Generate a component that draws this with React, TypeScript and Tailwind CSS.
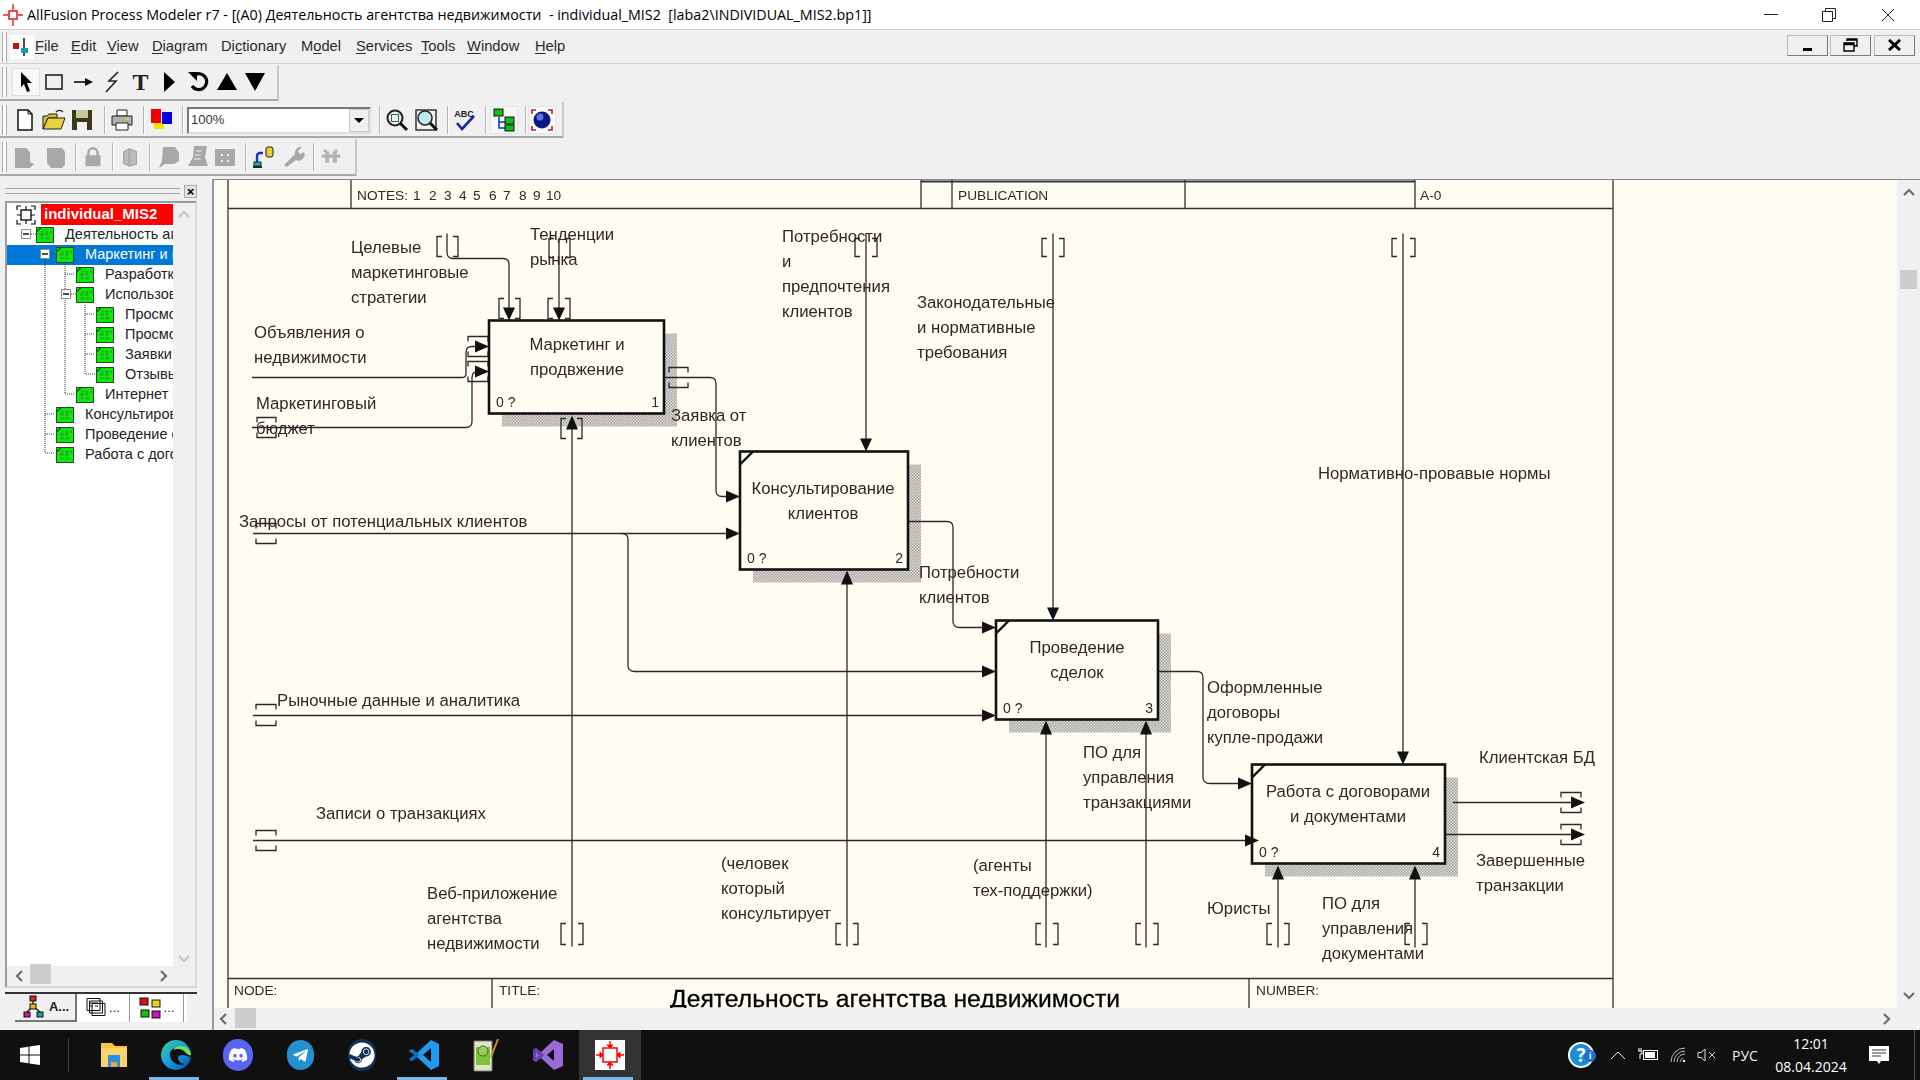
import type { ReactNode } from "react";
import { FaDiscord, FaSteam, FaTelegramPlane } from "react-icons/fa";

const menuItems = [
  { pre: "", key: "F", post: "ile", w: "w-[36px]" },
  { pre: "", key: "E", post: "dit", w: "w-[36px]" },
  { pre: "", key: "V", post: "iew", w: "w-[45px]" },
  { pre: "", key: "D", post: "iagram", w: "w-[69px]" },
  { pre: "Di", key: "c", post: "tionary", w: "w-[80px]" },
  { pre: "M", key: "o", post: "del", w: "w-[55px]" },
  { pre: "", key: "S", post: "ervices", w: "w-[65px]" },
  { pre: "", key: "T", post: "ools", w: "w-[46px]" },
  { pre: "", key: "W", post: "indow", w: "w-[68px]" },
  { pre: "", key: "H", post: "elp", w: "w-[40px]" },
];

const treeRows = [
  { level: 1, text: "Деятельность агентства недвижимости" },
  { level: 2, text: "Маркетинг и продвижение", selected: true },
  { level: 3, text: "Разработка стратегии" },
  { level: 3, text: "Использование каналов" },
  { level: 4, text: "Просмотр объявлений" },
  { level: 4, text: "Просмотр данных" },
  { level: 4, text: "Заявки клиентов" },
  { level: 4, text: "Отзывы клиентов" },
  { level: 3, text: "Интернет маркетинг" },
  { level: 2, text: "Консультирование клиентов" },
  { level: 2, text: "Проведение сделок" },
  { level: 2, text: "Работа с договорами" },
];

const treeIndent: Record<number, string> = {
  1: "pl-[29px]",
  2: "pl-[49px]",
  3: "pl-[69px]",
  4: "pl-[89px]",
};

// diagram data, in screen coordinates (the svg viewBox starts at the canvas corner)
const boxes = [
  { x: 489, y: 320, r: 664, b: 413, num: "1", corner: false, lines: ["Маркетинг и", "продвжение"], cx: 577, ty: 344 },
  { x: 740, y: 451, r: 908, b: 569, num: "2", corner: true, lines: ["Консультирование", "клиентов"], cx: 823, ty: 488 },
  { x: 996, y: 620, r: 1158, b: 719, num: "3", corner: true, lines: ["Проведение", "сделок"], cx: 1077, ty: 647 },
  { x: 1252, y: 764, r: 1445, b: 863, num: "4", corner: true, lines: ["Работа с договорами", "и документами"], cx: 1348, ty: 791 },
];

const labels = [
  { x: 351, y: 247, lines: ["Целевые", "маркетинговые", "стратегии"] },
  { x: 530, y: 234, lines: ["Тенденции", "рынка"] },
  { x: 254, y: 332, lines: ["Объявления о", "недвижимости"] },
  { x: 256, y: 403, lines: ["Маркетинговый", "бюджет"] },
  { x: 671, y: 415, lines: ["Заявка от", "клиентов"] },
  { x: 239, y: 521, lines: ["Запросы от потенциальных клиентов"] },
  { x: 277, y: 700, lines: ["Рыночные данные и аналитика"] },
  { x: 316, y: 813, lines: ["Записи о транзакциях"] },
  { x: 782, y: 236, lines: ["Потребности", "и", "предпочтения", "клиентов"] },
  { x: 917, y: 302, lines: ["Законодательные", "и нормативные", "требования"] },
  { x: 1318, y: 473, lines: ["Нормативно-провавые нормы"] },
  { x: 919, y: 572, lines: ["Потребности", "клиентов"] },
  { x: 1207, y: 687, lines: ["Оформленные", "договоры", "купле-продажи"] },
  { x: 1083, y: 752, lines: ["ПО для", "управления", "транзакциями"] },
  { x: 1479, y: 757, lines: ["Клиентская БД"] },
  { x: 1476, y: 860, lines: ["Завершенные", "транзакции"] },
  { x: 973, y: 865, lines: ["(агенты", "тех-поддержки)"] },
  { x: 1207, y: 908, lines: ["Юристы"] },
  { x: 1322, y: 903, lines: ["ПО для", "управления", "документами"] },
  { x: 721, y: 863, lines: ["(человек", "который", "консультирует"] },
  { x: 427, y: 893, lines: ["Веб-приложение", "агентства", "недвижимости"] },
];

const noteDigits = [
  [413, "1"], [429, "2"], [444, "3"], [459, "4"], [473, "5"],
  [489, "6"], [503, "7"], [519, "8"], [533, "9"], [546, "10"],
] as const;

const arrowLines = [
  "M447 233V252Q447 258 453 258H503Q509 258 509 264V310",
  "M559 238V310",
  "M252 377H462Q466 377 466 373V352Q466 346 472 346H480",
  "M252 427H466Q472 427 472 421V377Q472 371 478 371H480",
  "M572 946V425",
  "M664 377H710Q716 377 716 383V490Q716 496 722 496H730",
  "M253 533H732",
  "M622 533Q628 533 628 539V665Q628 671 635 671H986",
  "M253 715H986",
  "M253 840H1248",
  "M847 946V583",
  "M866 233V440",
  "M1053 233V609",
  "M1403 233V753",
  "M908 521H947Q953 521 953 527V621Q953 627 960 627H986",
  "M1158 671H1197Q1203 671 1203 677V777Q1203 783 1210 783H1242",
  "M1046 947V733",
  "M1146 947V733",
  "M1278 947V876",
  "M1415 947V876",
  "M1453 802H1572",
  "M1445 834H1572",
];

// tips of the arrow heads
const headsDown = [[509, 320], [559, 320], [866, 451], [1053, 620], [1403, 764]];
const headsUp = [[572, 415], [847, 570], [1046, 720], [1146, 720], [1278, 865], [1415, 865]];
const headsRight = [
  [489, 346], [489, 371], [740, 496], [740, 533], [996, 627], [996, 671], [996, 715],
  [1252, 783], [1259, 840], [1585, 802], [1585, 834],
];

const tunnelsV = [
  [437, 458, 236, 256], [499, 520, 298, 318], [549, 570, 238, 257], [548, 570, 298, 318],
  [561, 582, 418, 438], [561, 583, 923, 944], [836, 858, 923, 944], [1036, 1058, 923, 944],
  [1136, 1158, 923, 944], [1267, 1289, 923, 944], [1405, 1427, 923, 944],
  [855, 877, 238, 256], [1042, 1064, 238, 256], [1392, 1415, 238, 256],
];
const tunnelsH = [
  [468, 488, 336, 356], [468, 488, 361, 381], [669, 688, 367, 387], [257, 276, 417, 437],
  [256, 276, 523, 543], [256, 276, 704, 725], [256, 276, 830, 850],
  [1561, 1581, 792, 812], [1561, 1581, 824, 844],
];

const Slot = ({ className, children }: { className: string; children: ReactNode }) => (
  <div className={`flex h-7 w-7 shrink-0 items-center justify-center ${className}`}>{children}</div>
);

const Sep = ({ className }: { className: string }) => (
  <div className={`h-7 w-[2px] shrink-0 border-l border-r border-l-[#b4b4b4] border-r-white ${className}`} />
);

const Grip = () => (
  <div className="ml-[2px] mr-[3px] h-[30px] w-[5px] shrink-0 border-x border-x-[#a8a8a8] bg-white" />
);

const Ico = ({ children, size = 24 }: { children: ReactNode; size?: number }) => (
  <svg width={size} height={size} viewBox="0 0 24 24">
    {children}
  </svg>
);

const TreeIcon = () => (
  <svg width="18" height="16" viewBox="0 0 19 17" className="shrink-0">
    <rect x="0.5" y="0.5" width="18" height="16" fill="#00f000" stroke="#2c3a2c" />
    <path d="M1 5L5 1" stroke="#1c3a1c" strokeWidth="1.2" />
    <path d="M6 5h2M10 5h3M15 5h2M4 8h4M10 8h3M5 12h3M10 12h4" stroke="#3f8a3f" strokeWidth="2" />
  </svg>
);

const Chevron = ({ d, color = "#6d6d6d" }: { d: string; color?: string }) => (
  <svg width="12" height="12" viewBox="0 0 12 12">
    <path d={d} fill="none" stroke={color} strokeWidth="2.2" />
  </svg>
);

const ModelTree = () => (
  <div className="relative flex h-[787px] w-[192px] shrink-0 flex-col border-2 border-[#9c9c9c] border-b-[#d8d8d8] border-r-[#d8d8d8] bg-[#f0f0f0]">
    <div className="flex min-h-0 flex-1">
      <div className="relative w-[166px] overflow-hidden bg-white pt-px">
        <div className="flex h-[21px] items-center pl-[9px]">
          <svg width="20" height="20" viewBox="0 0 20 20" className="shrink-0">
            <rect x="5" y="5" width="10" height="10" fill="none" stroke="#111" strokeWidth="1.4" />
            <path d="M10 1v4M10 15v4M1 10h4M15 10h4M1 5V1h4M15 1h4v4M1 15v4h4M15 19h4v-4" fill="none" stroke="#111" strokeWidth="1.2" />
          </svg>
          <div className="ml-[5px] flex h-[21px] flex-1 items-center bg-[#ff0000] pl-[3px] text-[15px] font-bold text-white">
            individual_MIS2
          </div>
        </div>
        {treeRows.map((row) => (
          <div
            key={row.text}
            className={`flex h-5 items-center whitespace-nowrap ${treeIndent[row.level]} ${row.selected ? "bg-[#0078d7] text-white" : "text-[#222]"}`}
          >
            <TreeIcon />
            <span className="ml-[11px] text-[14.5px]">{row.text}</span>
          </div>
        ))}
        {/* dotted connectors and the expand boxes lie over the rows */}
        <svg className="absolute left-0 top-0" width="166" height="280" viewBox="7 203 166 280">
          <path
            d="M45 259V453H55M45 414H55M45 434H55M65 264V394H75M65 274H75M85 305V374H95M85 314H95M85 334H95M85 354H95M71 294H76M50 254H56M31 234H36"
            fill="none"
            stroke="#333"
            strokeDasharray="1 1"
          />
          <path d="M21.5 229.5h9v9h-9zM40.5 249.5h9v9h-9zM61.5 289.5h9v9h-9z" fill="#fff" stroke="#8a8a8a" />
          <path d="M23 234h6M42 254h6M63 294h6" stroke="#111" strokeWidth="1.4" />
        </svg>
      </div>
      <div className="flex flex-1 flex-col items-center justify-between pb-[2px] pt-[6px]">
        <Chevron d="M1 8l5-5 5 5" color="#c4c4c4" />
        <Chevron d="M1 4l5 5 5-5" color="#c4c4c4" />
      </div>
    </div>
    <div className="flex h-[20px] items-center justify-between pl-[7px] pr-[26px]">
      <Chevron d="M8 1L3 6l5 5" />
      <div className="absolute bottom-[2px] left-[23px] h-[20px] w-[21px] bg-[#cdcdcd]" />
      <Chevron d="M4 1l5 5-5 5" />
    </div>
  </div>
);

const TabIcon1 = () => (
  <svg width="26" height="24" viewBox="0 0 26 24">
    <path d="M12 6V11M6 17L12 11L19 17" fill="none" stroke="#111" strokeWidth="1.2" />
    <rect x="9" y="1" width="6" height="5" fill="#e02020" stroke="#111" />
    <rect x="9" y="9" width="6" height="5" fill="#e0c020" stroke="#111" />
    <rect x="3" y="17" width="6" height="5" fill="#c020a0" stroke="#111" />
    <rect x="16" y="17" width="6" height="5" fill="#20a0a0" stroke="#111" />
  </svg>
);

const LeftPanel = () => (
  <div className="flex h-full w-[197px] shrink-0 flex-col pl-[5px] pt-[2px]">
    <div className="flex h-5 items-center">
      <div className="h-[6px] w-[175px] border-y border-y-[#a8a8a8]" />
      <div className="ml-[4px] flex h-[13px] w-[13px] items-center justify-center border border-[#a8a8a8] bg-[#e4e4e4] text-[13px] font-bold leading-none text-black">
        ×
      </div>
    </div>
    <ModelTree />
    <div className="mt-1 h-[29px] w-[192px] border-t-2 border-t-[#333]">
      <div className="ml-[10px] flex h-[28px] w-[172px] bg-white text-[13px] text-[#222]">
        <div className="flex w-[62px] items-center justify-center gap-[2px] border-b-2 border-r-2 border-b-[#777] border-r-[#777] bg-[#f0f0f0] font-bold">
          <TabIcon1 />
          <span>A...</span>
        </div>
        <div className="flex w-[53px] items-center justify-center gap-[3px] border-r border-r-[#999]">
          <svg width="20" height="22" viewBox="0 0 20 22">
            <path d="M6 6.5h13v12H6zM3.5 4h13v12h-13zM1 1.5h13v12H1z" fill="#fff" stroke="#111" />
            <path d="M3 6h9M3 9h4M9 9h3" stroke="#111" />
          </svg>
          <span>...</span>
        </div>
        <div className="flex w-[54px] items-center justify-center gap-[3px] border-r border-r-[#999]">
          <svg width="22" height="22" viewBox="0 0 22 22">
            <rect x="1" y="1" width="8" height="7" fill="#e01010" stroke="#111" />
            <rect x="13" y="3" width="8" height="7" fill="#e8d020" stroke="#111" />
            <rect x="2" y="13" width="8" height="7" fill="#10c010" stroke="#111" />
            <rect x="13" y="14" width="8" height="7" fill="#d010c0" stroke="#111" />
          </svg>
          <span>...</span>
        </div>
      </div>
    </div>
  </div>
);

const Diagram = () => (
  <svg
    viewBox="214 179.5 1683 828"
    width="1683"
    height="828"
    className="block fill-[#2a2a2a] font-['Liberation_Sans',sans-serif] text-[16.7px] blur-[0.35px]"
  >
    <defs>
      <pattern id="hatch" width="3" height="3" patternUnits="userSpaceOnUse">
        <rect width="3" height="3" fill="#fffcf2" />
        <rect width="1.5" height="1.5" fill="#848484" />
        <rect x="1.5" y="1.5" width="1.5" height="1.5" fill="#848484" />
      </pattern>
    </defs>

    {/* frame of the IDEF0 form */}
    <g fill="none" stroke="#333" strokeWidth="1.3">
      <path d="M228 179V1008M1613 179V1008M228 208H1613M228 978H1613" />
      <path d="M351 179V208M921 179V208M952 179V208M1185 179V208M1415 179V208M492 978V1008M1249 978V1008" />
      <path d="M921 181H1415" strokeWidth="2" />
    </g>
    <g className="text-[13.7px]">
      <text x="357" y="199">NOTES:</text>
      {noteDigits.map(([x, digit]) => (
        <text key={digit} x={x} y="199">{digit}</text>
      ))}
      <text x="958" y="199">PUBLICATION</text>
      <text x="1420" y="199">A-0</text>
      <text x="234" y="994">NODE:</text>
      <text x="499" y="994">TITLE:</text>
      <text x="1256" y="994">NUMBER:</text>
    </g>
    <text x="895" y="1006" textAnchor="middle" className="fill-black text-[24.7px]" stroke="#000" strokeWidth="0.3">
      Деятельность агентства недвижимости
    </text>

    {/* shadows first, then the boxes */}
    {boxes.map((b) => (
      <path
        key={b.num}
        d={`M${b.r} ${b.y + 13}h13V${b.b + 13}H${b.x + 13}V${b.b}H${b.r}z`}
        fill="url(#hatch)"
      />
    ))}

    <g fill="none" stroke="#2a2a2a" strokeWidth="1.3">
      {arrowLines.map((d) => (
        <path key={d} d={d} />
      ))}
      {tunnelsV.map(([l, r, t, b]) => (
        <path key={`${l}${t}`} d={`M${l + 5} ${t}H${l}V${b}H${l + 5}M${r - 5} ${t}H${r}V${b}H${r - 5}`} />
      ))}
      {tunnelsH.map(([l, r, t, b]) => (
        <path key={`${l}${t}`} d={`M${l} ${t + 5}V${t}H${r}V${t + 5}M${l} ${b - 5}V${b}H${r}V${b - 5}`} />
      ))}
    </g>

    {boxes.map((b) => (
      <g key={b.num}>
        <rect
          x={b.x}
          y={b.y}
          width={b.r - b.x}
          height={b.b - b.y}
          fill="none"
          stroke="#111"
          strokeWidth="2.6"
        />
        {b.corner && <path d={`M${b.x} ${b.y + 13}L${b.x + 13} ${b.y}`} stroke="#111" strokeWidth="2.4" />}
        {b.lines.map((line, i) => (
          <text key={line} x={b.cx} y={b.ty + 5 + i * 25} textAnchor="middle">
            {line}
          </text>
        ))}
        <text x={b.x + 7} y={b.b - 7} className="text-[14px]">0 ?</text>
        <text x={b.r - 5} y={b.b - 7} textAnchor="end" className="text-[14px]">{b.num}</text>
      </g>
    ))}

    <g fill="#111">
      {headsDown.map(([x, y]) => (
        <path key={`${x}${y}`} d={`M${x} ${y}l-6-13h12z`} />
      ))}
      {headsUp.map(([x, y]) => (
        <path key={`${x}${y}`} d={`M${x} ${y}l-6 14h12z`} />
      ))}
      {headsRight.map(([x, y]) => (
        <path key={`${x}${y}`} d={`M${x} ${y}l-14-6v12z`} />
      ))}
    </g>

    {labels.map((l) =>
      l.lines.map((line, i) => (
        <text key={`${l.x}${line}`} x={l.x} y={l.y + 5 + i * 25}>
          {line}
        </text>
      )),
    )}
  </svg>
);

const TaskBtn = ({ children, active, current }: { children: ReactNode; active?: boolean; current?: boolean }) => (
  <div className={`relative flex h-full w-[62px] items-center justify-center ${current ? "bg-[#333]" : ""}`}>
    {children}
    {active && <div className="absolute bottom-0 left-[4px] right-[8px] h-[3px] bg-[#76b9ed]" />}
  </div>
);

const Taskbar = () => {
  const tray = "flex shrink-0 items-center justify-center";
  return (
    <div className="flex h-[50px] shrink-0 items-center bg-[#101010] font-['Open_Sans',sans-serif] text-white">
      <div className="flex h-full w-[60px] shrink-0 items-center justify-center">
        <svg width="20" height="20" viewBox="0 0 20 20" fill="#fff">
          <path d="M0 3l8.5-1.2V9.5H0zM9.5 1.6L20 0v9.5H9.5zM0 10.5h8.5v7.7L0 17zM9.5 10.5H20V20L9.5 18.4z" />
        </svg>
      </div>
      <div className="ml-[8px] h-[34px] w-px shrink-0 bg-[#444]" />
      <div className="ml-[14px] flex h-full items-center">
        <TaskBtn>
          <svg width="30" height="28" viewBox="0 0 30 28">
            <path d="M2 2h11l3 3h12v21H2z" fill="#f6c344" />
            <path d="M2 7h26v19H2z" fill="#fbd568" />
            <path d="M9 14h12v12h-3v-5h-6v5H9z" fill="#2d8fe0" />
            <rect x="12" y="21" width="6" height="5" fill="#e9a92e" />
          </svg>
        </TaskBtn>
        <TaskBtn active>
          <svg width="32" height="32" viewBox="0 0 32 32">
            <defs>
              <linearGradient id="edge" x1="0" y1="0" x2="1" y2="1">
                <stop offset="0" stopColor="#3bd0a0" />
                <stop offset="0.5" stopColor="#1a9be0" />
                <stop offset="1" stopColor="#0a4fa8" />
              </linearGradient>
            </defs>
            <circle cx="16" cy="16" r="15" fill="url(#edge)" />
            <path d="M31 18c-1-7-7-10-12-10-6 0-10 4-9 9 1 6 8 11 15 8-4 0-7-3-7-6 0-2 2-3 4-3 4 0 7 2 9 2z" fill="#101010" />
            <path d="M31 16c0-6-5-9-10-9-4 0-7 2-8 4 3-1 8-2 12 2 2 2 4 4 6 3z" fill="#6fe05a" />
          </svg>
        </TaskBtn>
        <TaskBtn>
          <div className="flex h-[32px] w-[30px] items-center justify-center rounded-full bg-[#5865f2]">
            <FaDiscord className="text-[20px] text-white" />
          </div>
        </TaskBtn>
        <TaskBtn>
          <div className="flex h-[30px] w-[27px] items-center justify-center rounded-full bg-[#2590cf]">
            <FaTelegramPlane className="text-[17px] text-white" />
          </div>
        </TaskBtn>
        <TaskBtn>
          <div className="flex h-[32px] w-[28px] items-center justify-center rounded-full bg-[#12315a]">
            <FaSteam className="text-[26px] text-white" />
          </div>
        </TaskBtn>
        <TaskBtn active>
          <svg width="30" height="32" viewBox="0 0 30 32">
            <path d="M22 1l8 4v22l-8 4L8 18l-5 4-3-2 6-4-6-4 3-2 5 4zM22 9l-8 7 8 7z" fill="#1f9cf0" />
            <path d="M0 12l3-2 5 4 2 2-2 2-5 4-3-2 6-4z" fill="#0b6fb8" />
          </svg>
        </TaskBtn>
        <TaskBtn>
          <svg width="28" height="36" viewBox="0 0 28 36">
            <path d="M2 4h18v30H2z" fill="#dfe6c8" stroke="#777" />
            <rect x="4" y="10" width="14" height="18" fill="#7dc23a" />
            <circle cx="11" cy="14" r="5" fill="#9ad060" stroke="#3f6a20" />
            <path d="M19 20L26 2" stroke="#c89020" strokeWidth="2" />
          </svg>
        </TaskBtn>
        <TaskBtn>
          <svg width="30" height="32" viewBox="0 0 30 32">
            <path d="M21 1l9 4v22l-9 4L8 19l-5 4-3-2V11l3-2 5 4zM21 10l-7 6 7 6z" fill="#9a6ad6" />
            <path d="M0 11l3-2 5 4 3 3-3 3-5 4-3-2zM3 13v6l3-3z" fill="#6a3fb0" />
          </svg>
        </TaskBtn>
        <TaskBtn active current>
          <div className="flex h-[30px] w-[30px] items-center justify-center bg-white">
            <svg width="30" height="30" viewBox="0 0 30 30" fill="none" stroke="#f00">
              <rect x="8" y="8" width="14" height="14" strokeWidth="1.5" />
              <path d="M15 1v6M15 23v6M1 15h6M23 15h6" strokeWidth="1.4" />
              <path d="M12 5h6l-3 3zM12 25h6l-3-3zM5 12v6l3-3zM25 12v6l-3-3z" fill="#f00" />
            </svg>
          </div>
        </TaskBtn>
      </div>
      <div className="ml-auto flex h-full items-center text-[14px]">
        <div className={`${tray} relative w-[30px]`}>
          <div className="flex h-[26px] w-[26px] items-center justify-center rounded-full border-2 border-white bg-[#1b8fd6] text-[19px] font-bold">?</div>
          <div className="absolute bottom-[6px] right-0 flex h-3 w-3 items-center justify-center rounded-full bg-[#1b6fd6] text-[9px] font-bold">i</div>
        </div>
        <div className={`${tray} ml-[14px] w-[16px]`}>
          <svg width="16" height="9" viewBox="0 0 16 9" fill="none" stroke="#eee"><path d="M1 8l7-7 7 7" /></svg>
        </div>
        <div className={`${tray} ml-[11px] w-[22px]`}>
          <svg width="22" height="14" viewBox="0 0 22 14" fill="none" stroke="#fff">
            <rect x="6.5" y="2.5" width="14" height="9" />
            <rect x="8" y="4" width="10" height="6" fill="#fff" stroke="none" />
            <path d="M2 0v3M4 0v3M1 3h4v3H3v5" />
          </svg>
        </div>
        <div className={`${tray} ml-[11px] w-[16px]`}>
          <svg width="16" height="16" viewBox="0 0 16 16" fill="none" stroke="#bbb">
            <path d="M1 15A14 14 0 0 1 15 1M4 15A11 11 0 0 1 15 4M7 15A8 8 0 0 1 15 7M10 15a5 5 0 0 1 3-4" />
            <circle cx="14" cy="14" r="1.2" fill="#fff" stroke="none" />
          </svg>
        </div>
        <div className={`${tray} ml-[11px] w-[20px]`}>
          <svg width="20" height="14" viewBox="0 0 20 14" fill="none" stroke="#ddd">
            <path d="M1 4.5h3l4-3.5v12L4 9.5H1zM12 4l6 6M18 4l-6 6" />
          </svg>
        </div>
        <div className="ml-[13px] w-[30px] text-center text-[14px] text-[#eee]">РУС</div>
        <div className="ml-[15px] flex w-[72px] flex-col items-center text-[14px] leading-[23px]">
          <span>12:01</span>
          <span>08.04.2024</span>
        </div>
        <div className={`${tray} ml-[22px] w-[20px]`}>
          <svg width="20" height="20" viewBox="0 0 20 20">
            <path d="M0 1h20v15h-8l-2 3-2-3H0z" fill="#fff" />
            <path d="M3 5h14M3 8h14M3 11h9" stroke="#333" />
          </svg>
        </div>
        <div className="ml-[25px] h-full w-[6px] border-l border-l-[#555]" />
      </div>
    </div>
  );
};

export default function App() {
  return (
    <div className="flex h-[1080px] w-[1920px] flex-col overflow-hidden bg-[#f0f0f0] font-['Liberation_Sans',sans-serif]">
      {/* title bar */}
      <div className="flex h-[29px] shrink-0 items-center bg-white">
        <svg width="20" height="24" viewBox="0 0 20 24" className="ml-[3px] mr-[4px] shrink-0" fill="none" stroke="#e8202a">
          <rect x="6" y="8" width="8" height="8" strokeWidth="1.6" />
          <path d="M10 1v6M10 17v6M0 12h5M15 12h5" strokeWidth="1.4" />
        </svg>
        <span className="whitespace-pre font-['Open_Sans',sans-serif] text-[14.3px] text-black">
          {"AllFusion Process Modeler r7 - [(A0) Деятельность агентства недвижимости  - individual_MIS2  [laba2\\INDIVIDUAL_MIS2.bp1]]"}
        </span>
        <svg width="14" height="2" className="ml-auto mr-[44px]"><rect width="14" height="1" fill="#222" /></svg>
        <svg width="14" height="14" viewBox="0 0 14 14" fill="none" stroke="#222" className="mr-[45px]">
          <path d="M3.5 3.5V.5h10v10h-3M.5 3.5h10v10H.5z" />
        </svg>
        <svg width="14" height="14" viewBox="0 0 14 14" stroke="#222" className="mr-[25px]">
          <path d="M1 1l12 12M13 1L1 13" />
        </svg>
      </div>

      {/* menu bar */}
      <div className="flex h-[35px] shrink-0 items-center border-y border-y-[#d0d0d0] text-[14.7px] text-[#2a2a2a]">
        <Grip />
        <svg width="24" height="24" viewBox="0 0 24 24" className="mr-[1px] shrink-0">
          <rect width="24" height="24" fill="#fff" />
          <path d="M14 3v18" stroke="#111" strokeWidth="1.5" />
          <rect x="3" y="8" width="6" height="6" fill="#c01010" />
          <rect x="11" y="13" width="7" height="5" fill="#10a0b0" />
        </svg>
        {menuItems.map((m) => (
          <div key={m.key + m.post} className={m.w}>
            {m.pre}
            <span className="underline underline-offset-2">{m.key}</span>
            {m.post}
          </div>
        ))}
        <div className="mb-[3px] ml-auto mr-[5px] flex h-[21px] gap-[2px]">
          <div className="flex w-[41px] items-end justify-center border border-[#bbb] border-b-[#777] border-r-[#777] pb-[4px]">
            <div className="h-[3px] w-[9px] bg-black" />
          </div>
          <div className="flex w-[41px] items-center justify-center border border-[#bbb] border-b-[#777] border-r-[#777]">
            <svg width="15" height="14" viewBox="0 0 15 14" fill="none" stroke="#000" strokeWidth="1.4">
              <path d="M4 3V1h10v7h-3M1 5h10v8H1zM1 6.5h10M4 2h10" />
            </svg>
          </div>
          <div className="ml-[1px] flex w-[41px] items-center justify-center border border-[#bbb] border-b-[#777] border-r-[#777]">
            <svg width="13" height="12" viewBox="0 0 13 12" stroke="#000" strokeWidth="3">
              <path d="M1 1l11 10M12 1L1 11" />
            </svg>
          </div>
        </div>
      </div>

      {/* toolbars */}
      <div className="flex shrink-0 flex-col gap-px pb-[3px] pt-px">
        <div className="flex h-[36px] w-[279px] items-center gap-[0.7px] border-b-2 border-r-2 border-b-[#a8a8a8] border-r-[#c8c8c8]">
          <Grip />
          <Slot className="ml-px border border-[#e0e0e0] bg-[#f8f8f8]">
            <Ico><path d="M7 2l11 11h-5l3 8-3 1-3-8-3 3z" fill="#000" /></Ico>
          </Slot>
          <Slot className="">
            <Ico><rect x="4" y="5" width="16" height="14" fill="none" stroke="#222" strokeWidth="1.6" /></Ico>
          </Slot>
          <Slot className="">
            <Ico><path d="M3 12h12" stroke="#222" strokeWidth="1.8" /><path d="M22 12l-8-4v8z" fill="#111" /></Ico>
          </Slot>
          <Slot className="">
            <Ico><path d="M18 2L9 11h7L6 22" fill="none" stroke="#222" strokeWidth="1.6" /></Ico>
          </Slot>
          <Slot className="">
            <span className="font-['Liberation_Serif',serif] text-[24px] font-bold leading-none text-[#222]">T</span>
          </Slot>
          <Slot className="">
            <Ico><path d="M7 2l11 10L7 22z" fill="#000" /></Ico>
          </Slot>
          <Slot className="">
            <Ico>
              <path d="M7 6a8 8 0 1 1-1 10" fill="none" stroke="#000" strokeWidth="3.2" />
              <path d="M2 2h9v9z" fill="#000" />
            </Ico>
          </Slot>
          <Slot className="">
            <Ico><path d="M12 3l10 17H2z" fill="#000" /></Ico>
          </Slot>
          <Slot className="">
            <Ico><path d="M2 3h20L12 21z" fill="#000" /></Ico>
          </Slot>
        </div>

        <div className="flex h-[36px] w-[564px] items-center border-b-2 border-r-2 border-b-[#a8a8a8] border-r-[#c8c8c8] pt-[2px]">
          <Grip />
          <Slot className="ml-px">
            <Ico><path d="M5 2h10l4 4v16H5z" fill="#fff" stroke="#111" strokeWidth="1.5" /><path d="M15 2v4h4" fill="none" stroke="#111" /></Ico>
          </Slot>
          <Slot className="ml-px">
            <Ico>
              <path d="M1 8h4l2-2h8v4H6L1 21z" fill="#d8c030" stroke="#222" />
              <path d="M6 10h17l-4 11H1z" fill="#e8d040" stroke="#222" />
              <path d="M14 4a5 5 0 0 1 7 0" fill="none" stroke="#222" strokeWidth="1.4" />
            </Ico>
          </Slot>
          <Slot className="">
            <Ico>
              <path d="M2 2h20v20H2z" fill="#3a3a14" />
              <rect x="6" y="2" width="12" height="8" fill="#c8c8a0" />
              <rect x="7" y="14" width="10" height="8" fill="#f0f0f0" />
            </Ico>
          </Slot>
          <Sep className="ml-[8px]" />
          <Slot className="ml-[2px]">
            <Ico>
              <path d="M7 2h10v6H7z" fill="#fff" stroke="#222" />
              <path d="M2 8h20v9H2z" fill="#b0b0b0" stroke="#222" />
              <path d="M6 15h12v7H6z" fill="#fff" stroke="#222" />
              <rect x="15" y="10" width="4" height="2" fill="#e0d030" />
            </Ico>
          </Slot>
          <Sep className="ml-[7px]" />
          <Slot className="ml-[2px]">
            <Ico>
              <rect x="5" y="14" width="10" height="7" fill="#ffe000" />
              <rect x="13" y="4" width="10" height="12" fill="#0000e8" />
              <rect x="2" y="1" width="10" height="14" fill="#f00000" />
            </Ico>
          </Slot>
          <Sep className="ml-[7px]" />
          <div className="ml-[3px] flex h-[27px] w-[184px] items-center justify-between border-2 border-[#777] border-b-[#ddd] border-r-[#ddd] bg-white pl-[2px] text-[13px] text-[#333]">
            100%
            <div className="flex h-[23px] w-[20px] items-center justify-center border border-[#ccc] bg-[#f0f0f0]">
              <div className="h-0 w-0 border-x-[5px] border-t-[5px] border-x-transparent border-t-black" />
            </div>
          </div>
          <Sep className="ml-[8px]" />
          <Slot className="ml-[2px]">
            <Ico>
              <circle cx="10" cy="10" r="7.5" fill="#dff3f3" stroke="#222" strokeWidth="2" />
              <rect x="6.5" y="6.5" width="7" height="7" fill="none" stroke="#555" />
              <path d="M15 15l7 7" stroke="#111" strokeWidth="3" />
            </Ico>
          </Slot>
          <Slot className="ml-px">
            <Ico>
              <path d="M2 2h20v20H2z" fill="none" stroke="#333" strokeWidth="1.5" />
              <circle cx="11" cy="10" r="7" fill="#bfeaf5" stroke="#222" strokeWidth="1.5" />
              <path d="M16 15l7 7" stroke="#111" strokeWidth="3" />
            </Ico>
          </Slot>
          <Sep className="ml-[7px]" />
          <Slot className="ml-px">
            <Ico>
              <text x="12" y="9" textAnchor="middle" className="fill-[#222] text-[9px] font-bold">ABC</text>
              <path d="M5 15l5 6L22 8" fill="none" stroke="#1a2a9c" strokeWidth="2.6" />
            </Ico>
          </Slot>
          <Sep className="ml-[7px]" />
          <Slot className="ml-[3px] border border-[#e4e4e4] bg-[#f8f8f8]">
            <Ico>
              <path d="M7 9v11h6M7 14h6" fill="none" stroke="#0030e0" strokeWidth="1.5" />
              <rect x="2" y="1" width="9" height="7" fill="#10c010" stroke="#111" />
              <rect x="13" y="9" width="9" height="7" fill="#10c010" stroke="#111" />
              <rect x="13" y="17" width="9" height="6" fill="#10c010" stroke="#111" />
            </Ico>
          </Slot>
          <Sep className="ml-[7px]" />
          <Slot className="ml-px border border-[#e4e4e4] bg-[#f8f8f8]">
            <Ico>
              <circle cx="12" cy="12" r="8.5" fill="#0a1a80" />
              <circle cx="10" cy="9" r="3.5" fill="#5a78e0" />
              <path d="M2 6V2h4M18 2h4v4M2 18v4h4M18 22h4v-4" fill="none" stroke="#b02020" strokeWidth="1.6" />
            </Ico>
          </Slot>
        </div>

        <div className="flex h-[37px] w-[357px] items-center border-b-2 border-r-2 border-b-[#a8a8a8] border-r-[#c8c8c8]">
          <Grip />
          <Slot className="">
            <Ico><path d="M3 3h11l4 4v10l4 2-4 4H3z" fill="#a8a8a8" /></Ico>
          </Slot>
          <Slot className="ml-[3px]">
            <Ico><path d="M4 8V3h15l3 4v13l-3 3H8l-4-5z" fill="#a8a8a8" /></Ico>
          </Slot>
          <Sep className="ml-[6px]" />
          <Slot className="ml-[2px]">
            <Ico size={20}><path d="M5 10V7a7 7 0 0 1 14 0v3h2v13H3V10zM8 10h8V7a4 4 0 0 0-8 0z" fill="#a8a8a8" /></Ico>
          </Slot>
          <Sep className="ml-[5px]" />
          <Slot className="ml-[2px]">
            <Ico size={22}><path d="M5 6l6-3 8 3v14l-8 2-6-3z" fill="#bbb" stroke="#999" /><path d="M11 3v19" stroke="#999" /></Ico>
          </Slot>
          <Sep className="ml-[5px]" />
          <Slot className="ml-[3px]">
            <Ico><path d="M7 2h12l4 6v8l-5 3H9l-6 4 3-7z" fill="#a8a8a8" /></Ico>
          </Slot>
          <Slot className="ml-px">
            <Ico><path d="M9 1h13l-2 11 3 9H3l5-9z" fill="#a8a8a8" /><path d="M11 6h6M10 10h6M9 14h7" stroke="#eee" /></Ico>
          </Slot>
          <Slot className="">
            <Ico><rect x="2" y="4" width="20" height="17" fill="#a8a8a8" /><path d="M8 9h2v2H8zM14 9h2v2h-2zM8 15h2v2H8zM14 15h2v2h-2z" fill="#eee" /></Ico>
          </Slot>
          <Sep className="ml-[6px]" />
          <Slot className="ml-[3px]">
            <Ico>
              <path d="M5 18v-7a3 3 0 0 1 3-3h3" fill="none" stroke="#1030e0" strokeWidth="2.4" />
              <rect x="14" y="2" width="7" height="10" rx="2" fill="#e8d030" stroke="#222" />
              <rect x="2" y="17" width="7" height="4" fill="#10b0b0" stroke="#222" />
              <rect x="1" y="21" width="9" height="2" fill="#222" />
            </Ico>
          </Slot>
          <Slot className="ml-px">
            <Ico><path d="M3 20L14 9a6 6 0 0 1 7-7l-4 4 2 3 4-2a6 6 0 0 1-8 8L6 22z" fill="#a8a8a8" /></Ico>
          </Slot>
          <Sep className="ml-[6px]" />
          <Slot className="ml-[2px]">
            <Ico size={20}><path d="M5 5h5v14H5zM14 5h5v14h-5zM1 9h22v4H1zM3 3h4v3H3zM16 3h4v3h-4z" fill="#b4b4b4" /></Ico>
          </Slot>
        </div>
      </div>

      {/* workspace */}
      <div className="flex min-h-0 flex-1">
        <LeftPanel />
        <div className="h-full w-[17px] shrink-0 border-r-2 border-r-[#9a9a9a]" />
        <div className="flex min-w-0 flex-1 flex-col border-t border-t-[#888]">
          <div className="flex h-[828px] shrink-0">
            <div className="h-[828px] w-[1683px] shrink-0 overflow-hidden bg-[#fffcf2]">
              <Diagram />
            </div>
            <div className="relative flex flex-1 flex-col items-center justify-between py-[7px]">
              <Chevron d="M1 8l5-5 5 5" />
              <div className="absolute left-[3px] top-[90px] h-[19px] w-[17px] bg-[#cdcdcd]" />
              <Chevron d="M1 4l5 5 5-5" />
            </div>
          </div>
          <div className="relative flex flex-1 items-center justify-between pl-[4px] pr-[5px]">
            <Chevron d="M8 1L3 6l5 5" />
            <div className="absolute left-[21px] top-0 h-[20px] w-[21px] bg-[#cdcdcd]" />
            <div className="mr-[23px]">
              <Chevron d="M4 1l5 5-5 5" />
            </div>
          </div>
        </div>
      </div>

      <Taskbar />
    </div>
  );
}
